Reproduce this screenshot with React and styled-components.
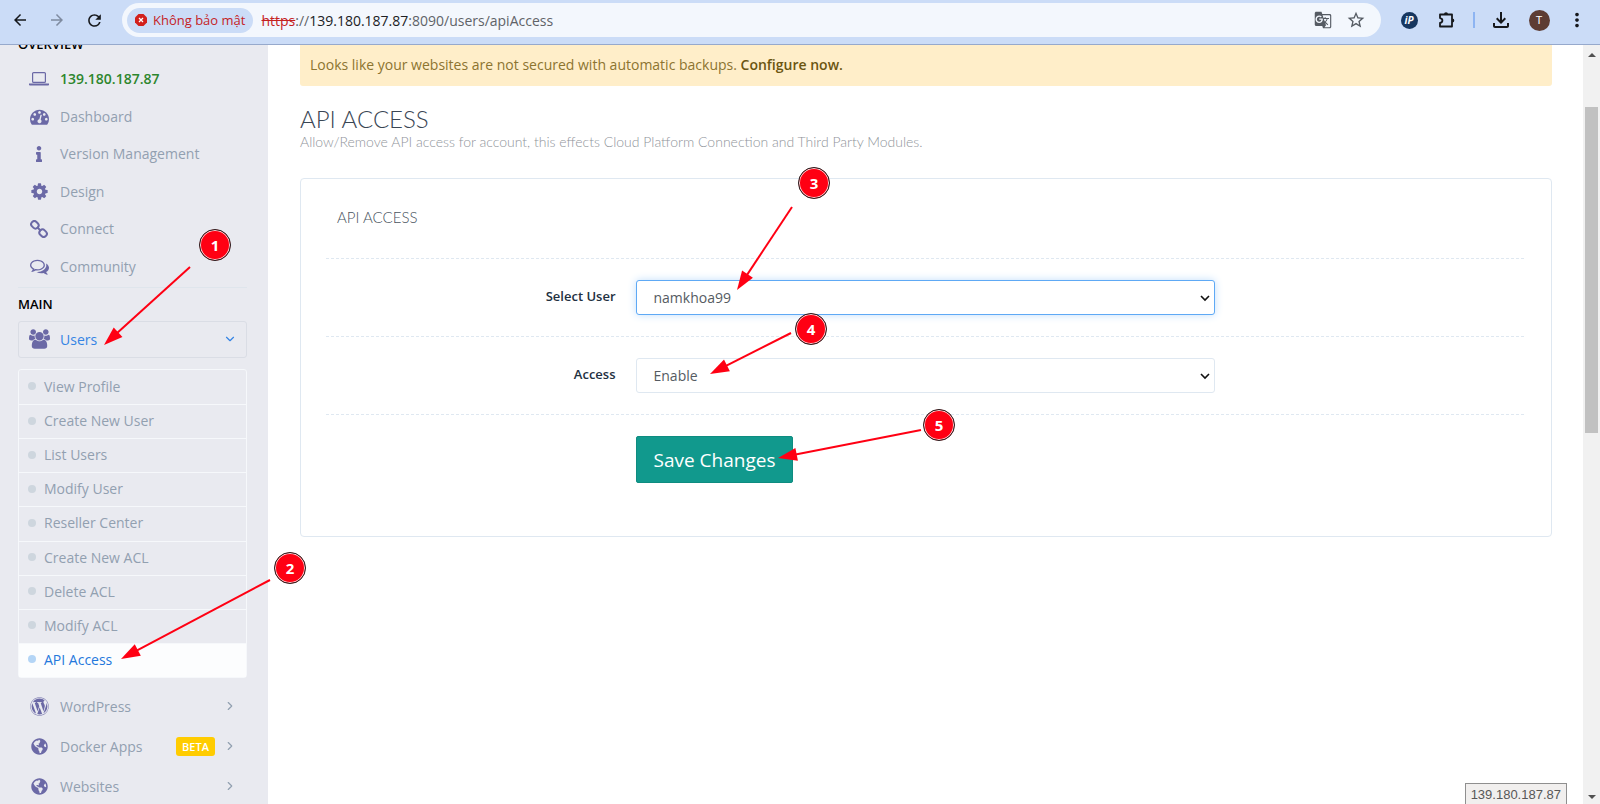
import React from "react";
import styled, { createGlobalStyle } from "styled-components";
import {
  MdArrowBack,
  MdArrowForward,
  MdRefresh,
  MdStarBorder,
  MdOutlineFileDownload,
  MdMoreVert,
  MdGTranslate,
} from "react-icons/md";
import { FaGlobeAmericas, FaInfo, FaWordpress } from "react-icons/fa";
import { ChevronDown, ChevronRight } from "lucide-react";

const LaptopIcon = () => (
  <svg viewBox="0 0 20 16" width="20" height="16" fill="none">
    <rect x="3.6" y="1.6" width="12.8" height="9.8" rx="1" stroke="currentColor" strokeWidth="1.2" />
    <path d="M0 12.6h20v.8q0 1.2-2 1.2H2q-2 0-2-1.2z" fill="currentColor" />
  </svg>
);

const DashboardIcon = () => (
  <svg viewBox="0 0 1792 1792" width="19" height="19" fill="currentColor">
    <path d="M384 1152q0-53-37.5-90.5t-90.5-37.5-90.5 37.5-37.5 90.5 37.5 90.5 90.5 37.5 90.5-37.5 37.5-90.5zm192-448q0-53-37.5-90.5t-90.5-37.5-90.5 37.5-37.5 90.5 37.5 90.5 90.5 37.5 90.5-37.5 37.5-90.5zm428 481l101-382q6-26-7.5-48.5t-38.5-29.5-48 6.5-30 39.5l-101 382q-60 5-107 43.5t-63 98.5q-20 77 20 146t117 89 146-20 89-117q16-60-6-117t-72-91zm660-33q0-53-37.5-90.5t-90.5-37.5-90.5 37.5-37.5 90.5 37.5 90.5 90.5 37.5 90.5-37.5 37.5-90.5zm-640-640q0-53-37.5-90.5t-90.5-37.5-90.5 37.5-37.5 90.5 37.5 90.5 90.5 37.5 90.5-37.5 37.5-90.5zm448 192q0-53-37.5-90.5t-90.5-37.5-90.5 37.5-37.5 90.5 37.5 90.5 90.5 37.5 90.5-37.5 37.5-90.5zm320 448q0 261-141 483-19 29-54 29h-1402q-35 0-54-29-141-221-141-483 0-182 71-348t191-286 286-191 348-71 348 71 286 191 191 286 71 348z" />
  </svg>
);

const CogIcon = () => (
  <svg viewBox="0 0 1792 1792" width="19" height="19" fill="currentColor">
    <path d="M1152 896q0-106-75-181t-181-75-181 75-75 181 75 181 181 75 181-75 75-181zm512-109v222q0 12-8 23t-20 13l-185 28q-19 54-39 91 35 50 107 138 10 12 10 25t-9 23q-27 37-99 108t-94 71q-12 0-26-9l-138-108q-44 23-91 38-16 136-29 186-7 28-36 28h-222q-14 0-24.5-8.5t-11.5-21.5l-28-184q-49-16-90-37l-141 107q-10 9-25 9-14 0-25-11-126-114-165-168-7-10-7-23 0-12 8-23 15-21 51-66.5t54-70.5q-27-50-41-99l-183-27q-13-2-21-12.5t-8-23.5v-222q0-12 8-23t19-13l186-28q14-46 39-92-40-57-107-138-10-12-10-24 0-10 9-23 26-36 98.5-107.5t94.5-71.5q13 0 26 10l138 107q44-23 91-38 16-136 29-186 7-28 36-28h222q14 0 24.5 8.5t11.5 21.5l28 184q49 16 90 37l142-107q9-9 24-9 13 0 25 10 129 119 165 170 7 8 7 22 0 12-8 23-15 21-51 66.5t-54 70.5q26 50 41 98l183 28q13 2 21 12.5t8 23.5z" />
  </svg>
);

const ChainIcon = () => (
  <svg viewBox="0 0 18 18" width="18" height="18" fill="none" stroke="currentColor" strokeWidth="2">
    <rect x="-3.9" y="-3.1" width="7.8" height="6.2" rx="3" transform="translate(4.9 4.8) rotate(45)" />
    <rect x="-3.9" y="-3.1" width="7.8" height="6.2" rx="3" transform="translate(13.1 13.2) rotate(45)" />
    <path d="M7 7l4 4" />
  </svg>
);

const CommentsIcon = () => (
  <svg viewBox="0 0 1792 1792" width="19" height="19" fill="currentColor">
    <path d="M704 384q-153 0-286 52t-211.5 141-78.5 191q0 82 53 158t149 132l97 56-35 84q34-20 62-39l44-31 53 10q78 14 153 14 153 0 286-52t211.5-141 78.5-191-78.5-191-211.5-141-286-52zm0-128q191 0 353.5 68.5t256.5 186.5 94 257-94 257-256.5 186.5-353.5 68.5q-86 0-176-16-124 88-278 128-36 9-86 16h-3q-11 0-20.5-8t-11.5-21q-1-3-1-6.5t.5-6.5 2-6l2.5-5 3.5-5.5 4-5 4.5-5 4-4.5q5-6 23-25t26-29.5 22.5-29 25-38.5 20.5-44q-124-72-195-177t-71-224q0-139 94-257t256.5-186.5 353.5-68.5zm822 1169q10 24 20.5 44t25 38.5 22.5 29 26 29.5 23 25q1 1 4 4.5t4.5 5 4 5 3.5 5.5l2.5 5 2 6 .5 6.5-1 6.5q-3 14-13 22t-22 7q-50-7-86-16-154-40-278-128-90 16-176 16-271 0-472-132 58 4 88 4 161 0 309-45t264-129q125-92 192-212t67-254q0-77-23-152 129 71 204 178t75 230q0 120-71 224.5t-195 176.5z" />
  </svg>
);

const UsersIcon = () => (
  <svg viewBox="0 0 1920 1792" width="21" height="20" fill="currentColor">
    <path d="M593 896q-162 5-265 128h-134q-82 0-138-40.5t-56-118.5q0-353 124-353 6 0 43.5 21t97.5 42.5 119 21.5q67 0 133-23-5 37-5 66 0 139 81 256zm1071 637q0 120-73 189.5t-194 69.5h-874q-121 0-194-69.5t-73-189.5q0-53 3.5-103.5t14-109 26.5-108.5 43-97.5 62-81 85.5-53.5 111.5-20q10 0 43 21.5t73 48 107 48 135 21.5 135-21.5 107-48 73-48 43-21.5q61 0 111.5 20t85.5 53.5 62 81 43 97.5 26.5 108.5 14 109 3.5 103.5zm-1024-1277q0 106-75 181t-181 75-181-75-75-181 75-181 181-75 181 75 75 181zm704 384q0 159-112.5 271.5t-271.5 112.5-271.5-112.5-112.5-271.5 112.5-271.5 271.5-112.5 271.5 112.5 112.5 271.5zm576 225q0 78-56 118.5t-138 40.5h-134q-103-123-265-128 81-117 81-256 0-29-5-66 66 23 133 23 59 0 119-21.5t97.5-42.5 43.5-21q124 0 124 353zm-128-609q0 106-75 181t-181 75-181-75-75-181 75-181 181-75 181 75 75 181z" />
  </svg>
);

const PuzzleIcon = () => (
  <svg viewBox="0 0 18 18" width="18" height="18">
    <path
      d="M2 3.5h12v12H2v-3.6q2.4-.4 2.4-2.4T2 7.1z"
      fill="none"
      stroke="currentColor"
      strokeWidth="1.8"
      strokeLinejoin="round"
    />
    <path d="M6 3.2a2 2 0 0 1 4 0zM14.3 7.5a2 2 0 0 1 0 4z" fill="currentColor" />
  </svg>
);

const overview = [
  { label: "139.180.187.87", icon: <LaptopIcon />, server: true },
  { label: "Dashboard", icon: <DashboardIcon /> },
  { label: "Version Management", icon: <FaInfo size={16} /> },
  { label: "Design", icon: <CogIcon /> },
  { label: "Connect", icon: <ChainIcon /> },
  { label: "Community", icon: <CommentsIcon /> },
];

const userLinks = [
  "View Profile",
  "Create New User",
  "List Users",
  "Modify User",
  "Reseller Center",
  "Create New ACL",
  "Delete ACL",
  "Modify ACL",
  "API Access",
];

const apps = [
  { label: "WordPress", icon: <FaWordpress size={19} /> },
  { label: "Docker Apps", icon: <FaGlobeAmericas size={17} />, badge: "BETA" },
  { label: "Websites", icon: <FaGlobeAmericas size={17} /> },
];

// x/y is the centre of the numbered dot, from/to are the ends of its arrow
const steps = [
  { n: 1, x: 215, y: 245, from: [190, 267], to: [104, 345] },
  { n: 2, x: 290, y: 568, from: [270, 580], to: [121, 659] },
  { n: 3, x: 814, y: 183, from: [792, 207], to: [737, 290] },
  { n: 4, x: 811, y: 329, from: [791, 333], to: [710, 374] },
  { n: 5, x: 939, y: 425, from: [921, 430], to: [778, 458] },
];

const Arrow = ({ from, to }) => {
  const angle = (Math.atan2(to[1] - from[1], to[0] - from[0]) * 180) / Math.PI;
  const length = Math.hypot(to[0] - from[0], to[1] - from[1]);
  return (
    <g transform={`translate(${from[0]} ${from[1]}) rotate(${angle})`}>
      <path d={`M0 0H${length - 14}`} stroke="#ff0013" strokeWidth="2" />
      <path d={`M${length} 0l-19-6.5v13z`} fill="#ff0013" />
    </g>
  );
};

const BrowserBar = () => (
  <Bar>
    <NavButtons>
      <IconButton aria-label="Back">
        <MdArrowBack size={18} />
      </IconButton>
      <IconButton aria-label="Forward" $dim>
        <MdArrowForward size={18} />
      </IconButton>
      <IconButton aria-label="Reload">
        <MdRefresh size={19} />
      </IconButton>
    </NavButtons>
    <Address>
      <Warning>
        <svg viewBox="0 0 12 12" width="12" height="12">
          <path d="M3.5 0h5L12 3.5v5L8.5 12h-5L0 8.5v-5z" fill="#d2201c" />
          <path d="M4 4l4 4M8 4l-4 4" stroke="#fff" strokeWidth="1.3" />
        </svg>
        Không bảo mật
      </Warning>
      <Url>
        <del>https</del>://<b>139.180.187.87</b>:8090/users/apiAccess
      </Url>
      <IconButton aria-label="Translate" $grey>
        <MdGTranslate size={18} />
      </IconButton>
      <IconButton aria-label="Bookmark" $grey>
        <MdStarBorder size={20} />
      </IconButton>
    </Address>
    <Extensions>
      <IconButton aria-label="IP extension">
        <IpLogo>iP</IpLogo>
      </IconButton>
      <IconButton aria-label="Extensions">
        <PuzzleIcon />
      </IconButton>
      <Separator />
      <IconButton aria-label="Downloads">
        <MdOutlineFileDownload size={24} />
      </IconButton>
      <IconButton aria-label="Profile">
        <Avatar>T</Avatar>
      </IconButton>
      <IconButton aria-label="Menu">
        <MdMoreVert size={22} />
      </IconButton>
    </Extensions>
  </Bar>
);

const Sidebar = () => (
  <Side>
    <SideTitle $clipped>OVERVIEW</SideTitle>
    <OverviewList>
      {overview.map((item) => (
        <SideLink href="#" key={item.label} $server={item.server}>
          <SideIcon>{item.icon}</SideIcon>
          {item.label}
        </SideLink>
      ))}
    </OverviewList>
    <Rule />
    <SideTitle>MAIN</SideTitle>
    <UsersToggle>
      <SideIcon>
        <UsersIcon />
      </SideIcon>
      <Grow>Users</Grow>
      <ChevronDown size={14} strokeWidth={2} />
    </UsersToggle>
    <SubMenu>
      {userLinks.map((label) => (
        <SubLink href="#" key={label} $active={label === "API Access"}>
          {label}
        </SubLink>
      ))}
    </SubMenu>
    <AppList>
      {apps.map((item) => (
        <SideLink href="#" key={item.label}>
          <SideIcon>{item.icon}</SideIcon>
          <Grow>{item.label}</Grow>
          {item.badge && <Badge>{item.badge}</Badge>}
          <ChevronRight size={14} strokeWidth={2} />
        </SideLink>
      ))}
    </AppList>
  </Side>
);

const ApiAccess = () => (
  <Main>
    <Alert>
      Looks like your websites are not secured with automatic backups. <a href="#">Configure now.</a>
    </Alert>
    <Title>API ACCESS</Title>
    <Subtitle>
      Allow/Remove API access for account, this effects Cloud Platform Connection and Third Party Modules.
    </Subtitle>
    <Card>
      <CardTitle>API ACCESS</CardTitle>
      <FormRow>
        <Label htmlFor="user">Select User</Label>
        <SelectWrap>
          <Select id="user" $focused defaultValue="namkhoa99">
            <option>namkhoa99</option>
          </Select>
          <SelectArrow />
        </SelectWrap>
      </FormRow>
      <FormRow>
        <Label htmlFor="access">Access</Label>
        <SelectWrap>
          <Select id="access" defaultValue="Enable">
            <option>Enable</option>
            <option>Disable</option>
          </Select>
          <SelectArrow />
        </SelectWrap>
      </FormRow>
      <FormRow>
        <SaveButton type="button">Save Changes</SaveButton>
      </FormRow>
    </Card>
  </Main>
);

const SelectArrow = () => (
  <Chevron viewBox="0 0 10 7" width="10" height="7">
    <path d="M1 1l4 4 4-4" fill="none" stroke="#111" strokeWidth="1.6" />
  </Chevron>
);

const App = () => {
  return (
    <Screen>
      <GlobalStyle />
      <BrowserBar />
      <Viewport>
        <Sidebar />
        <ApiAccess />
        <ScrollTrack>
          <ScrollArrow viewBox="0 0 8 4">
            <path d="M0 4l4-4 4 4z" />
          </ScrollArrow>
          <ScrollThumb />
          <ScrollArrow viewBox="0 0 8 4">
            <path d="M0 0l4 4 4-4z" />
          </ScrollArrow>
        </ScrollTrack>
      </Viewport>
      <Arrows>
        {steps.map((step) => (
          <Arrow key={step.n} from={step.from} to={step.to} />
        ))}
      </Arrows>
      {steps.map((step) => (
        <Step key={step.n} $x={step.x} $y={step.y}>
          {step.n}
        </Step>
      ))}
      <Tooltip>139.180.187.87</Tooltip>
    </Screen>
  );
};

export default App;

const GlobalStyle = createGlobalStyle`
  * {
    box-sizing: border-box;
  }
  body {
    margin: 0;
    font-family: "Open Sans", "Noto Sans", sans-serif;
    font-size: 14px;
    background: #ffffff;
  }
  a {
    text-decoration: none;
  }
  button, select {
    font-family: inherit;
  }
`;

const Screen = styled.div`
  position: relative;
  display: flex;
  flex-direction: column;
  height: 100vh;
  overflow: hidden;
`;
const Bar = styled.header`
  display: flex;
  align-items: center;
  flex: none;
  height: 45px;
  padding-bottom: 4px;
  background: #cbdcf7;
  border-bottom: 1px solid #96a9cc;
`;
const NavButtons = styled.div`
  display: flex;
  gap: 9px;
  padding: 0 14px 0 6px;
`;
const IconButton = styled.button`
  display: flex;
  align-items: center;
  justify-content: center;
  width: 28px;
  height: 28px;
  padding: 0;
  border: 0;
  background: none;
  color: ${(props) => (props.$dim ? "#7f8ba0" : props.$grey ? "#555b63" : "#16181c")};
`;
const Address = styled.div`
  display: flex;
  align-items: center;
  flex: 1;
  gap: 5px;
  height: 34px;
  padding: 0 11px 0 5px;
  border-radius: 17px;
  background: #f3f7fd;
`;
const Warning = styled.span`
  display: flex;
  align-items: center;
  gap: 6px;
  height: 25px;
  padding: 0 8px;
  border-radius: 13px;
  background: #cbdcf7;
  color: #c5221f;
  font-size: 13px;
`;
const Url = styled.span`
  flex: 1;
  padding-left: 3px;
  color: #5f6368;
  del {
    color: #c5221f;
  }
  b {
    color: #202124;
    font-weight: 400;
  }
`;
const Extensions = styled.div`
  display: flex;
  align-items: center;
  gap: 10px;
  padding: 0 9px 0 14px;
`;
const IpLogo = styled.span`
  width: 17px;
  height: 17px;
  border-radius: 50%;
  background: #16365f;
  color: #ffffff;
  font: italic 700 10px/17px "Open Sans", sans-serif;
`;
const Separator = styled.span`
  width: 2px;
  height: 16px;
  margin: 0 2px;
  background: #8db4f2;
`;
const Avatar = styled.span`
  width: 21px;
  height: 21px;
  border-radius: 50%;
  background: #5d3c33;
  color: #ffffff;
  font: 11px/21px Roboto, sans-serif;
`;

const Viewport = styled.div`
  display: flex;
  flex: 1;
  min-height: 0;
  overflow: hidden;
`;
const Side = styled.nav`
  flex: none;
  width: 268px;
  padding: 0 21px 0 18px;
  background: #e9eaf0;
`;
const SideTitle = styled.h2`
  margin: ${(props) => (props.$clipped ? "-11px 0 6px" : "6px 0 7px")};
  color: #000000;
  font-size: 13px;
  font-weight: 600;
  line-height: 20px;
`;
const OverviewList = styled.div`
  display: grid;
  grid-auto-rows: 1fr;
  min-height: 225px;
`;
const SideLink = styled.a`
  display: flex;
  align-items: center;
  padding: 0 10px 0 6px;
  color: ${(props) => (props.$server ? "#2d862d" : "#92a0b0")};
  font-weight: ${(props) => (props.$server ? 600 : 400)};
`;
const SideIcon = styled.span`
  display: flex;
  justify-content: center;
  width: 30px;
  margin-right: 6px;
  color: #6b69a6;
`;
const Grow = styled.span`
  flex: 1;
  text-align: left;
`;
const Rule = styled.hr`
  height: 1px;
  margin: 2px 0 0;
  border: 0;
  background: #dfe5ec;
`;
const UsersToggle = styled.button`
  display: flex;
  align-items: center;
  width: 100%;
  height: 37px;
  padding: 0 9px 1px 5px;
  border: 1px solid #dadde5;
  border-radius: 3px;
  background: none;
  color: #3584e4;
  font-size: 14px;
`;
const SubMenu = styled.div`
  display: grid;
  grid-auto-rows: 1fr;
  min-height: 309px;
  margin-top: 11px;
  border: 1px solid #f6f8fb;
  border-radius: 3px;
`;
const SubLink = styled.a`
  display: flex;
  align-items: center;
  gap: 8px;
  padding: 0 9px 2px;
  color: ${(props) => (props.$active ? "#2478dc" : "#92a0b0")};
  background: ${(props) => (props.$active ? "#fcfdfe" : "none")};
  & + & {
    border-top: 1px solid #f6f8fb;
  }
  &::before {
    content: "";
    width: 8px;
    height: 8px;
    border-radius: 50%;
    background: ${(props) => (props.$active ? "#b4d5f6" : "#ced6de")};
  }
`;
const AppList = styled.div`
  display: grid;
  grid-auto-rows: 40px;
  margin-top: 8px;
`;
const Badge = styled.span`
  margin-right: 8px;
  padding: 0 6px;
  border-radius: 3px;
  background: #ffcc00;
  color: #ffffff;
  font-size: 11px;
  font-weight: 600;
  line-height: 19px;
`;

const Main = styled.main`
  flex: 1;
  min-width: 0;
  padding: 0 31px 0 32px;
`;
const Alert = styled.div`
  padding: 10px 10px 11px;
  border-radius: 0 0 3px 3px;
  background: #ffeec9;
  color: #8c7430;
  line-height: 20px;
  a {
    color: #6b5510;
    font-weight: 600;
  }
`;
const Title = styled.h1`
  margin: 19px 0 0;
  color: #3a4654;
  font: 300 24px/28px Lato, sans-serif;
`;
const Subtitle = styled.p`
  margin: 0;
  color: #8f949a;
  font: 300 14px/18px Lato, sans-serif;
`;
const Card = styled.section`
  margin-top: 27px;
  padding: 0 27px 53px 25px;
  border: 1px solid #dfe8f1;
  border-radius: 4px;
`;
const CardTitle = styled.h2`
  margin: 0;
  padding: 28px 11px 31px;
  color: #4a5460;
  font: 300 15px/20px Lato, sans-serif;
`;
const FormRow = styled.div`
  display: grid;
  grid-template-columns: 3fr 6fr 3fr;
  padding: 21px 0;
  border-top: 1px dashed #dfe8f1;
  &:last-child {
    padding-bottom: 0;
  }
`;
const Label = styled.label`
  padding: 6px 10px 0 0;
  color: #22303f;
  font-size: 13px;
  font-weight: 600;
  line-height: 20px;
  text-align: right;
`;
const SelectWrap = styled.div`
  position: relative;
  margin: 0 10px;
`;
const Select = styled.select`
  display: block;
  width: 100%;
  height: 35px;
  padding: 0 17px 1px;
  border: 1px solid ${(props) => (props.$focused ? "#5ea9f5" : "#dfe8f1")};
  border-radius: 3px;
  appearance: none;
  background: #ffffff;
  color: #555b62;
  font-size: 14px;
  box-shadow: ${(props) => (props.$focused ? "0 0 8px #c2dffb" : "none")};
`;
const Chevron = styled.svg`
  position: absolute;
  top: 15px;
  right: 5px;
  pointer-events: none;
`;
const SaveButton = styled.button`
  grid-column: 2;
  justify-self: start;
  height: 47px;
  margin-left: 10px;
  padding: 0 17px;
  border: 1px solid #0e8c80;
  border-radius: 2px;
  background: #11998d;
  color: #ffffff;
  font-size: 19px;
`;

const ScrollTrack = styled.div`
  display: flex;
  flex-direction: column;
  flex: none;
  width: 17px;
  padding: 8px 2px 5px;
  background: #f1f1f1;
`;
const ScrollArrow = styled.svg`
  flex: none;
  align-self: center;
  width: 8px;
  height: 4px;
  fill: #505050;
`;
const ScrollThumb = styled.div`
  height: 326px;
  margin: 50px 0 auto;
  background: #c1c1c1;
`;

const Arrows = styled.svg`
  position: absolute;
  top: 0;
  left: 0;
  width: 100%;
  height: 100%;
  pointer-events: none;
`;
const Step = styled.span`
  position: absolute;
  left: ${(props) => props.$x - 16}px;
  top: ${(props) => props.$y - 16}px;
  width: 32px;
  height: 32px;
  border: 1px solid #222222;
  border-radius: 50%;
  background: #ff0013;
  box-shadow: inset 0 0 0 1px #ffd5d8;
  color: #ffffff;
  font: 700 15px/30px "Open Sans", sans-serif;
  text-align: center;
`;
const Tooltip = styled.div`
  position: absolute;
  right: 33px;
  bottom: 0;
  padding: 2px 5px 0;
  border: 1px solid #8f8f8f;
  border-bottom: 0;
  background: #f1efee;
  color: #575757;
  font: 13px/18px "Liberation Sans", Arial, sans-serif;
`;
